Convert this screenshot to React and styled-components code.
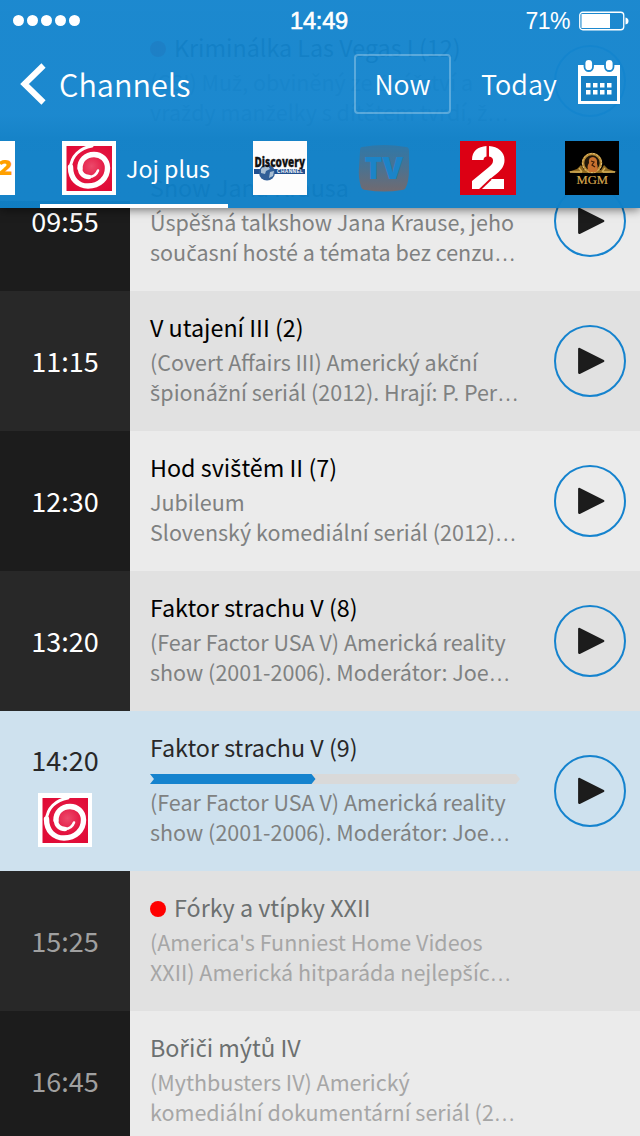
import React from "react";
import styled, { createGlobalStyle } from "styled-components";

const Global = createGlobalStyle`
  * { box-sizing: border-box; }
  body { margin: 0; background: #ebebeb; font-family: "Noto Sans CJK SC", "Noto Sans", sans-serif; }
`;

const Screen = styled.div`
  position: relative;
  width: 640px;
  height: 1136px;
  overflow: hidden;
`;

const Header = styled.header`
  position: absolute;
  inset: 0 0 auto 0;
  height: 208px;
  color: #fff;
  display: flex;
  flex-direction: column;
  background: linear-gradient(rgba(20, 133, 206, 0.96) 0, rgba(20, 133, 206, 0.96) 115px, rgba(16, 128, 199, 0.973) 140px, rgba(16, 128, 199, 0.973) 100%);
  box-shadow: 0 2px 9px rgba(0, 0, 0, 0.5);
`;

const StatusBar = styled.div`
  height: 40px;
  padding: 0 13px;
  display: grid;
  grid-template-columns: 1fr 60px 1fr;
  align-items: center;
  font-family: "Liberation Sans", sans-serif;
`;

const Signal = styled.div`
  display: flex;
  gap: 3px;
  i { width: 11px; height: 11px; border-radius: 50%; background: #fff; }
`;

const Clock = styled.div`
  font-size: 23.6px;
  line-height: 28px;
  padding-top: 2px;
  letter-spacing: -0.2px;
  white-space: nowrap;
  -webkit-text-stroke: 0.6px #fff;
`;

const Power = styled.div`
  display: flex;
  align-items: center;
  justify-content: flex-end;
  gap: 9px;
  font-size: 23px;
  line-height: 28px;
  letter-spacing: -0.5px;
  margin-right: -2px;
  padding-top: 1px;
  svg { display: block; }
`;

const NavBar = styled.nav`
  height: 88px;
  padding: 0 20px;
  display: flex;
  align-items: center;
  font-size: 26.6px;
  font-weight: 350;
  line-height: 40px;
  svg { flex: none; display: block; }
`;

const Back = styled.div`
  display: flex;
  align-items: center;
  gap: 13px;
  margin-right: auto;
  font-size: 30.6px;
`;

const NowButton = styled.div`
  width: 97px;
  height: 60px;
  border: 2px solid rgba(255, 255, 255, 0.28);
  border-radius: 4px;
  display: grid;
  place-items: center;
  margin-right: 30px;
`;

const Today = styled.div`
  width: 76px;
  margin-right: 21px;
  font-size: 27px;
  white-space: nowrap;
`;

const CalendarButton = styled.div`
  margin-bottom: 5px;
`;

const Tabs = styled.div`
  flex: 1;
  display: flex;
  align-items: flex-start;
  svg { display: block; flex: none; }
`;

const Tab = styled.div`
  width: ${(p) => p.$w}px;
  height: 80px;
  padding-top: 13px;
  padding-left: ${(p) => p.$pad || 0}px;
  margin-right: ${(p) => p.$gap || 0}px;
  display: flex;
  flex: none;
  gap: 10px;
  font-size: 23.2px;
  line-height: 54px;
  white-space: nowrap;
  border-bottom: 4px solid ${(p) => (p.$active ? "#fff" : "transparent")};
`;

const List = styled.main`
  padding-top: 11px;
`;

const Row = styled.article`
  height: ${(p) => (p.$now ? 160 : 140)}px;
  display: flex;
  background: ${(p) => (p.$now ? "#cee1ee" : p.$alt ? "#e1e1e1" : "#ebebeb")};
`;

const timeBackground = (p) => {
  if (p.$now || p.$covered === "all") return "transparent";
  if (p.$covered === "part") return "linear-gradient(#ebebeb 50px, #1c1c1c 50px)";
  return p.$alt ? "#282828" : "#1c1c1c";
};

const Time = styled.div`
  width: 130px;
  flex: none;
  display: flex;
  flex-direction: column;
  align-items: center;
  justify-content: center;
  gap: 13px;
  padding-top: ${(p) => (p.$now ? 4 : 0)}px;
  font-size: 27px;
  line-height: 40px;
  color: ${(p) => (p.$now ? "#282828" : p.$later ? "#a0a0a0" : "#fff")};
  background: ${timeBackground};
  svg { display: block; }
`;

const Body = styled.div`
  width: 410px;
  padding: 16px 0 0 20px;
  white-space: nowrap;
`;

const Title = styled.div`
  height: 40px;
  line-height: 40px;
  font-size: 23.3px;
  display: flex;
  align-items: center;
  gap: 8px;
  color: ${(p) => (p.$later ? "#6c7070" : p.$now ? "#282828" : "#000")};
`;

const RecDot = styled.i`
  width: 16px;
  height: 16px;
  margin-top: 4px;
  border-radius: 50%;
  background: #f00;
`;

const Line = styled.div`
  height: 30px;
  line-height: 30px;
  font-size: 21.5px;
  color: ${(p) => (p.$later ? "#a6a6a6" : "#7f8181")};
`;

const Caron = styled.span`
  font-family: "Noto Sans", sans-serif;
  line-height: 0;
`;

const Ellipsis = styled.span`
  font-family: "Open Sans", sans-serif;
  font-weight: 300;
  font-size: 30px;
  line-height: 0;
`;

const Progress = styled.div`
  width: 370px;
  height: 10px;
  margin: 7px 0 3px;
  svg { display: block; }
`;

const PlayButton = styled.div`
  width: 72px;
  height: 72px;
  margin: auto 14px;
  flex: none;
  display: grid;
  place-items: center;
  border: 2px solid #1583ce;
  border-radius: 50%;
  svg { display: block; }
`;

const Play = () => (
  <PlayButton>
    <svg width="68" height="68" viewBox="0 0 68 68">
      <path d="M23.300 22L47.200 34 23.300 45.800Z" fill="#1c1c1c" stroke="#1c1c1c" strokeWidth="2.400" strokeLinejoin="round" />
    </svg>
  </PlayButton>
);

const JojLogo = () => (
  <svg width="54" height="54" viewBox="0 0 54 54">
    <defs>
      <radialGradient id="joj" cx=".55" cy=".45" r=".65">
        <stop offset="0" stopColor="#ec4a6b" />
        <stop offset=".5" stopColor="#e3143f" />
        <stop offset="1" stopColor="#e00a35" />
      </radialGradient>
    </defs>
    <path d="M0 0h54v54H0z" fill="#fff" />
    <path d="M4.500 5h45.500v45H4.500z" fill="url(#joj)" />
    <g fill="none" stroke="#fff" strokeLinecap="round">
      <path d="M30 5C18 7 9 15 8.500 27" strokeWidth="3" />
      <path d="M8.500 26C8.500 38 16 45 26 45 37.500 45 45.500 37 45.500 27 45.500 18.500 39 13.500 32 13.500 23.500 13.500 18 19.500 18 27" strokeWidth="5.400" />
      <path d="M18 27C18 32.500 22 36 27 36" strokeWidth="4.500" />
      <path d="M27 36C31 36 34.500 33.500 36 29.500" strokeWidth="2.500" />
    </g>
  </svg>
);

const DiscoveryLogo = () => (
  <svg width="54" height="54" viewBox="0 0 54 54">
    <path d="M0 0h54v54H0z" fill="#fdfdfd" />
    <path d="M1 28h51v5H1z" fill="#22508f" />
    <circle cx="14" cy="31.500" r="8" fill="#315f97" />
    <path d="M8 28q3-4 7-3l2 3-4 2-1 3-4-1zM17 31l4-1-1 5-4 2z" fill="#a9bfd3" />
    <text x="1.500" y="26" fontFamily="Open Sans, sans-serif" fontWeight="800" fontSize="14.500" fill="#111" stroke="#111" strokeWidth=".3" textLength="50.500" lengthAdjust="spacingAndGlyphs">Discovery</text>
    <text x="24" y="32.300" fontFamily="Liberation Sans, sans-serif" fontWeight="700" fontSize="4.800" fill="#fff" textLength="26">CHANNEL</text>
  </svg>
);

const TvLogo = () => (
  <svg width="54" height="54" viewBox="0 0 54 54">
    <defs>
      <linearGradient id="tv" x2="0" y2="1">
        <stop offset="0" stopColor="#2e78a9" />
        <stop offset=".5" stopColor="#4b7290" />
        <stop offset="1" stopColor="#716a70" />
      </linearGradient>
    </defs>
    <path d="M5 6Q27 2 49 6q3 0 3 4v18q0 12-3 18-1 3-4 3-18 3-36 0-4 0-5-3-3-10-2-20l1-16q0-4 2-4Z" fill="url(#tv)" />
    <text x="7.500" y="38" fontFamily="Open Sans, sans-serif" fontWeight="800" fontSize="29.500" fill="#1b84c8" textLength="38.500" lengthAdjust="spacingAndGlyphs">TV</text>
  </svg>
);

const TwoLogo = () => (
  <svg width="56" height="54" viewBox="0 0 56 54">
    <path d="M0 0h56v54H0z" fill="#dc0014" />
    <path
      d="M12 19C12 10 18 5.500 26.500 5V15.500C24 16 23.500 17.500 23.500 19ZM29 5C38 5.500 44.500 11 44.500 19c0 6-3 9.500-7 13L30 38h14v10H24.500L12 48v-8L29 26c3-2.500 4-4 4-6.500 0-2-1-3.500-4-4Z"
      fill="#fff"
    />
    <path d="M19.500 49L31 38" stroke="#dc0014" strokeWidth="1.800" />
  </svg>
);

const MgmLogo = () => (
  <svg width="54" height="54" viewBox="0 0 54 54">
    <path d="M0 0h54v54H0z" fill="#000" />
    <path d="M3 31l9-3 4-4 3 5h17l3-5 4 4 9 3-9 1H12Z" fill="#8e681f" />
    <path d="M5 31h12m21 0h12M14 27l3 4m23-4l-3 4" stroke="#d3ae58" strokeWidth="1.300" fill="none" />
    <circle cx="27" cy="22" r="9" fill="#21170a" stroke="#b98a34" strokeWidth="2.600" />
    <circle cx="27" cy="22" r="9.500" fill="none" stroke="#ebcd84" strokeWidth=".9" strokeDasharray="2 1.500" />
    <path d="M24 31q-3-5 0-9-1-6 4-6 5 1 4 7 2 5-1 8Z" fill="#c9712f" />
    <path d="M26 20l3 1-2 3 3 2" stroke="#3d1c08" strokeWidth="1.200" fill="none" />
    <text x="11.500" y="42.500" fontFamily="Liberation Serif, serif" fontSize="13" fill="#d8a84e" stroke="#d8a84e" strokeWidth=".2" textLength="31.500" lengthAdjust="spacingAndGlyphs">MGM</text>
  </svg>
);

const EdgeLogo = () => (
  <svg width="15" height="54" viewBox="0 0 15 54">
    <path d="M0 0h15v54H0z" fill="#fff" />
    <text x="-1.500" y="34" fontFamily="Open Sans, sans-serif" fontWeight="800" fontSize="21" fill="#ffa000" textLength="14" lengthAdjust="spacingAndGlyphs">2</text>
  </svg>
);

const Calendar = () => (
  <CalendarButton>
    <svg width="42" height="46" viewBox="0 0 42 46">
      <path fill="#fff" d="M0 6h42v39H0z" />
      <path d="M3 17h36v25H3z" fill="#1780c4" />
      <rect x="6.500" y="0" width="8.500" height="12" rx="4.250" fill="#fff" stroke="#1c88cd" strokeWidth="1.800" />
      <rect x="27" y="0" width="8.500" height="12" rx="4.250" fill="#fff" stroke="#1c88cd" strokeWidth="1.800" />
      {[8, 15, 22, 29].map((x) => (
        <path key={x} d={`M${x} 24h4.500v4.500h-4.500zM${x} 31h4.500v4.500h-4.500z`} fill="#fff" />
      ))}
    </svg>
  </CalendarButton>
);

const programmes = [
  { title: "Kriminálka Las Vegas I (12)", rec: true, covered: "all", lines: ["(CSI) Muž, obviněný ze žhářství a", "vraždy manželky s dítětem tvrdí, ž…"], alt: true },
  { time: "09:55", title: "Show Jana Krausa", covered: "part", lines: ["Úspěšná talkshow Jana Krause, jeho", "současní hosté a témata bez cenzu…"] },
  { time: "11:15", title: "V utajení III (2)", alt: true, lines: ["(Covert Affairs III) Americký akční", "špionážní seriál (2012). Hrají: P. Per…"] },
  { time: "12:30", title: "Hod svištěm II (7)", lines: ["Jubileum", "Slovenský komediální seriál (2012)…"] },
  { time: "13:20", title: "Faktor strachu V (8)", alt: true, lines: ["(Fear Factor USA V) Americká reality", "show (2001-2006). Moderátor: Joe…"] },
  { time: "14:20", title: "Faktor strachu V (9)", now: true, lines: ["(Fear Factor USA V) Americká reality", "show (2001-2006). Moderátor: Joe…"] },
  { time: "15:25", title: "Fórky a vtípky XXII", rec: true, later: true, alt: true, lines: ["(America's Funniest Home Videos", "XXII) Americká hitparáda nejlepšíc…"] },
  { time: "16:45", title: "Bořiči mýtů IV", later: true, lines: ["(Mythbusters IV) Americký", "komediální dokumentární seriál (2…"] },
];

const Czech = ({ children }) =>
  children.split(/([šžčř…])/).map((part, i) => {
    if (part === "…") return <Ellipsis key={i}>…</Ellipsis>;
    return i % 2 ? <Caron key={i}>{part}</Caron> : part;
  });

const Programme = ({ p }) => (
  <Row $now={p.now} $alt={p.alt}>
    <Time $now={p.now} $alt={p.alt} $later={p.later} $covered={p.covered}>
      {p.time}
      {p.now && <JojLogo />}
    </Time>
    <Body>
      <Title $later={p.later} $now={p.now}>
        {p.rec && <RecDot />}
        <span><Czech>{p.title}</Czech></span>
      </Title>
      {p.now && (
        <Progress>
          <svg width="370" height="10" viewBox="0 0 370 10">
            <path d="M0 0h366l4 5-4 5H0l4-5Z" fill="#d9d9d9" />
            <path d="M0 0h161.500l4 5-4 5H0l4-5Z" fill="#1583ce" />
          </svg>
        </Progress>
      )}
      {p.lines.map((l) => (
        <Line key={l} $later={p.later}>
          <Czech>{l}</Czech>
        </Line>
      ))}
    </Body>
    {!p.later && <Play />}
  </Row>
);

export default function App() {
  return (
    <Screen lang="cs">
      <Global />
      <List>
        {programmes.map((p) => (
          <Programme key={p.title} p={p} />
        ))}
      </List>
      <Header>
        <StatusBar>
          <Signal><i /><i /><i /><i /><i /></Signal>
          <Clock>14:49</Clock>
          <Power>
            71%
            <svg width="50" height="20" viewBox="0 0 50 20">
              <rect x=".75" y="1.250" width="44" height="17.500" rx="3" fill="none" stroke="#fff" strokeWidth="1.300" />
              <path d="M2.500 3h28.500v14H2.500z" fill="#fff" />
              <path d="M46.500 6.500q3 .5 3 3.500t-3 3.500z" fill="#fff" />
            </svg>
          </Power>
        </StatusBar>
        <NavBar>
          <Back>
            <svg width="26" height="42" viewBox="0 0 26 42">
              <path d="M23.500 2.500L4.500 21l19 18.500" fill="none" stroke="#fff" strokeWidth="6" />
            </svg>
            Channels
          </Back>
          <NowButton>Now</NowButton>
          <Today>Today</Today>
          <Calendar />
        </NavBar>
        <Tabs>
          <Tab $w={15} $gap={25}><EdgeLogo /></Tab>
          <Tab $w={188} $pad={22} $gap={25} $active><JojLogo />Joj plus</Tab>
          <Tab $w={54} $gap={50}><DiscoveryLogo /></Tab>
          <Tab $w={54} $gap={49}><TvLogo /></Tab>
          <Tab $w={56} $gap={49}><TwoLogo /></Tab>
          <Tab $w={54}><MgmLogo /></Tab>
        </Tabs>
      </Header>
    </Screen>
  );
}
